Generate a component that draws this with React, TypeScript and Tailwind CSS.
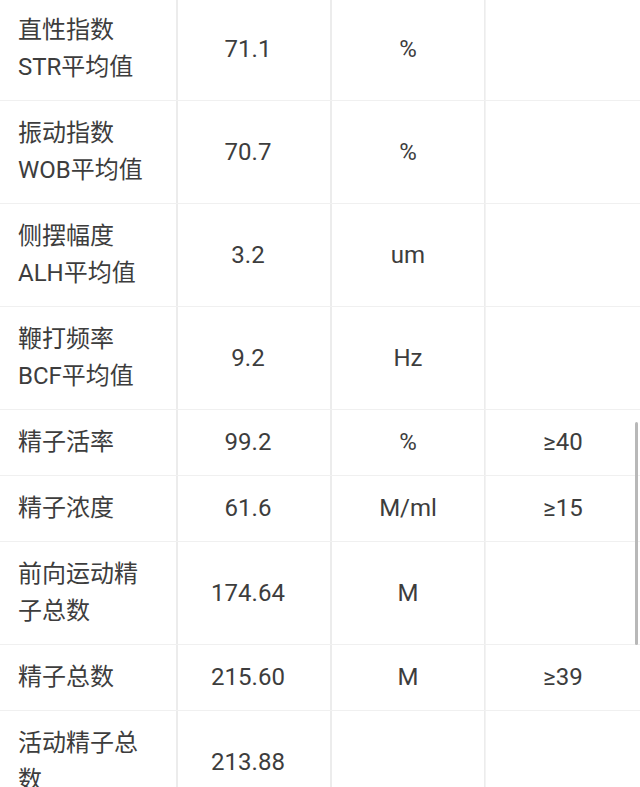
const rows: { name: string[]; value: string; unit: string; ref: string }[] = [
  { name: ['直性指数', 'STR平均值'], value: '71.1', unit: '%', ref: '' },
  { name: ['振动指数', 'WOB平均值'], value: '70.7', unit: '%', ref: '' },
  { name: ['侧摆幅度', 'ALH平均值'], value: '3.2', unit: 'um', ref: '' },
  { name: ['鞭打频率', 'BCF平均值'], value: '9.2', unit: 'Hz', ref: '' },
  { name: ['精子活率'], value: '99.2', unit: '%', ref: '≥40' },
  { name: ['精子浓度'], value: '61.6', unit: 'M/ml', ref: '≥15' },
  { name: ['前向运动精', '子总数'], value: '174.64', unit: 'M', ref: '' },
  { name: ['精子总数'], value: '215.60', unit: 'M', ref: '≥39' },
  { name: ['活动精子总', '数'], value: '213.88', unit: '', ref: '' },
]

export default function App() {
  return (
    <div
      className="relative h-[787px] w-[640px] overflow-hidden bg-white text-[24px] leading-[37px] text-[#3d3d3d]"
      style={{ fontFamily: 'Roboto, "Noto Sans CJK SC", sans-serif' }}
    >
      <div className="-mt-[2px] flex flex-col">
        {rows.map((row, i) => (
          <div key={i} className="grid grid-cols-[177px_154px_154px_155px] border-b border-[#f0f0f0]">
            <div className="border-r border-[#ececec] py-[14px] pl-[18px]">
              {row.name.map((line, j) => (
                <div key={j}>{line}</div>
              ))}
            </div>
            <div className="flex items-center justify-center border-r border-l border-[#ececec] pr-[12px]">{row.value}</div>
            <div className="flex items-center justify-center border-r border-l border-[#ececec]">{row.unit}</div>
            <div className="flex items-center justify-center border-l border-[#f3f3f3]">{row.ref}</div>
          </div>
        ))}
      </div>
      <div className="absolute right-[2px] top-[422px] h-[223px] w-[3px] rounded-full bg-[#b8b8b8]" />
    </div>
  )
}
